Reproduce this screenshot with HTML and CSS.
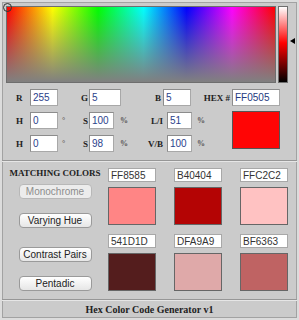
FILE: index.html
```html
<!DOCTYPE html>
<html>
<head>
    <meta charset="utf-8">
    <title>Hex Color Code Generator</title>
    <link rel="stylesheet" href="styles.css">
</head>
<body>
    <div class="app">
        <div class="picker">
            <div class="spectrum">
                <span class="marker"></span>
            </div>
            <div class="shade"></div>
            <span class="pointer"></span>
        </div>

        <div class="fields">
            <label class="lbl first">R</label>
            <input class="num" type="text" value="255">
            <label class="lbl mid">G</label>
            <input class="num wide" type="text" value="5">
            <label class="lbl third b-lbl">B</label>
            <input class="num b-input" type="text" value="5">
            <label class="lbl hex-lbl">HEX #</label>
            <input class="num hex" type="text" value="FF0505">

            <label class="lbl first">H</label>
            <input class="num" type="text" value="0">
            <span class="unit deg">°</span>
            <label class="lbl mid">S</label>
            <input class="num" type="text" value="100">
            <span class="unit pct">%</span>
            <label class="lbl third">L/I</label>
            <input class="num" type="text" value="51">
            <span class="unit pct2">%</span>
            <div class="current"></div>

            <label class="lbl first">H</label>
            <input class="num" type="text" value="0">
            <span class="unit deg">°</span>
            <label class="lbl mid">S</label>
            <input class="num" type="text" value="98">
            <span class="unit pct">%</span>
            <label class="lbl third">V/B</label>
            <input class="num" type="text" value="100">
            <span class="unit pct2">%</span>
        </div>

        <div class="sep"></div>

        <div class="matching">
            <div class="schemes">
                <div class="title">MATCHING COLORS</div>
                <button class="btn" disabled>Monochrome</button>
                <button class="btn b2">Varying Hue</button>
                <button class="btn b3">Contrast Pairs</button>
                <button class="btn b4">Pentadic</button>
            </div>
            <div class="match c1"><input type="text" value="FF8585"><div class="chip" style="background:#FF8585"></div></div>
            <div class="match c2"><input type="text" value="B40404"><div class="chip" style="background:#B40404"></div></div>
            <div class="match c3"><input type="text" value="FFC2C2"><div class="chip" style="background:#FFC2C2"></div></div>
            <div class="match c1"><input type="text" value="541D1D"><div class="chip" style="background:#541D1D"></div></div>
            <div class="match c2"><input type="text" value="DFA9A9"><div class="chip" style="background:#DFA9A9"></div></div>
            <div class="match c3"><input type="text" value="BF6363"><div class="chip" style="background:#BF6363"></div></div>
        </div>

        <div class="sep"></div>

        <div class="footer">Hex Color Code Generator v1</div>
    </div>
</body>
</html>
```

FILE: styles.css
```css
body {
    margin: 0;
    font-family: "Liberation Sans", Arial, sans-serif;
}
.app {
    width: 299px;
    height: 320px;
    box-sizing: border-box;
    border: 2px solid #dcdcdc;
    box-shadow: inset 0 0 0 1px #a2a2a2;
    background: #cbcbcb;
    display: flex;
    flex-direction: column;
}
.picker {
    display: flex;
    padding: 4px 4px 0 4px;
    height: 77px;
    position: relative;
}
.spectrum {
    position: relative;
    width: 270px;
    height: 77px;
    box-sizing: border-box;
    border: 1px solid #6e6e6e;
    background:
        linear-gradient(to bottom, rgba(128,128,128,0), #808080),
        linear-gradient(to right, #f00, #ff0 17%, #0f0 34%, #0ff 51%, #00f 67%, #f0f 84%, #f00);
}
.marker {
    position: absolute;
    left: -4px;
    top: -4px;
    width: 7px;
    height: 7px;
    border: 1px solid #333;
    border-radius: 50%;
}
.shade {
    width: 10px;
    height: 77px;
    margin-left: 2px;
    box-sizing: border-box;
    border: 1px solid #6e6e6e;
    background: linear-gradient(to bottom, #fff, #f00 48%, #000);
}
.pointer {
    position: absolute;
    left: 288px;
    top: 36px;
    width: 0;
    height: 0;
    border-top: 3px solid transparent;
    border-bottom: 3px solid transparent;
    border-right: 5px solid #000;
}
.fields {
    display: grid;
    grid-template-columns: 28px 28px 25px 6px 25px 36px 17px 25px 13px 27px 48px;
    grid-template-rows: 17px 17px 17px;
    row-gap: 6px;
    align-items: center;
    margin-top: 6px;
}
.lbl {
    font-family: "Liberation Serif", "Times New Roman", serif;
    font-weight: bold;
    font-size: 9px;
    color: #222;
    white-space: nowrap;
}
.first { grid-column: 1; padding-left: 14px; }
.mid { grid-column: 4; justify-self: end; margin-right: 1px; }
.third { grid-column: 7; justify-self: end; margin-right: 4px; }
.b-lbl { margin-right: 6px; }
.hex-lbl { grid-column: 10; justify-self: end; margin-right: 2px; }
.num {
    width: 100%;
    height: 17px;
    box-sizing: border-box;
    border: 1px solid #a8a8a8;
    border-top-color: #8c8c8c;
    border-left-color: #8c8c8c;
    padding: 0 2px;
    font-family: "Liberation Sans", Arial, sans-serif;
    font-size: 10px;
    color: #2b3f8c;
    background: #fff;
}
.wide { width: 32px; }
.b-input { margin-left: -4px; width: 28px; }
.hex { color: #243a80; }
.unit {
    font-family: "Liberation Serif", "Times New Roman", serif;
    font-weight: bold;
    font-size: 8px;
    color: #555;
}
.deg { grid-column: 3; padding-left: 4px; }
.pct { grid-column: 6; padding-left: 6px; }
.pct2 { grid-column: 9; padding-left: 5px; }
.current {
    grid-column: 11;
    grid-row: 2 / 4;
    align-self: start;
    margin-top: -1px;
    height: 38px;
    box-sizing: border-box;
    border: 1px solid #555;
    background: #ff0505;
}
.sep {
    border-top: 1px solid #969696;
    border-bottom: 1px solid #e6e6e6;
}
.fields + .sep { margin-top: 8px; }
.matching {
    height: 137px;
    box-sizing: border-box;
    padding-top: 6px;
    display: grid;
    grid-template-columns: 106px 48px 18px 48px 18px 48px;
    grid-template-rows: auto auto;
    row-gap: 9px;
    align-content: start;
}
.schemes {
    grid-column: 1;
    grid-row: 1 / 3;
    display: flex;
    flex-direction: column;
    align-items: center;
}
.title {
    font-family: "Liberation Serif", "Times New Roman", serif;
    font-weight: bold;
    font-size: 9px;
    line-height: 10px;
    color: #222;
    white-space: nowrap;
}
.btn {
    width: 73px;
    height: 15px;
    margin-top: 6px;
    padding: 0;
    border: 1px solid #9a9a9a;
    border-radius: 4px;
    background: linear-gradient(#ffffff, #e6e6e6);
    font-family: "Liberation Sans", Arial, sans-serif;
    font-size: 10px;
    color: #222;
}
.btn:disabled {
    color: #8c8c8c;
    border-color: #b8b8b8;
    background: #ececec;
}
.b2 { margin-top: 14px; }
.b3 { margin-top: 19px; }
.b4 { margin-top: 14px; }
.match {
    display: flex;
    flex-direction: column;
    gap: 5px;
}
.c1 { grid-column: 2; }
.c2 { grid-column: 4; }
.c3 { grid-column: 6; }
.match input {
    width: 48px;
    height: 14px;
    box-sizing: border-box;
    border: 1px solid #a8a8a8;
    padding: 0 2px;
    font-family: "Liberation Sans", Arial, sans-serif;
    font-size: 10px;
    color: #333;
    background: #fff;
}
.chip {
    height: 38px;
    box-sizing: border-box;
    border: 1px solid #666;
}
.footer {
    flex: 1;
    display: flex;
    align-items: center;
    justify-content: center;
    font-family: "Liberation Serif", "Times New Roman", serif;
    font-weight: bold;
    font-size: 10px;
    color: #222;
}
```
